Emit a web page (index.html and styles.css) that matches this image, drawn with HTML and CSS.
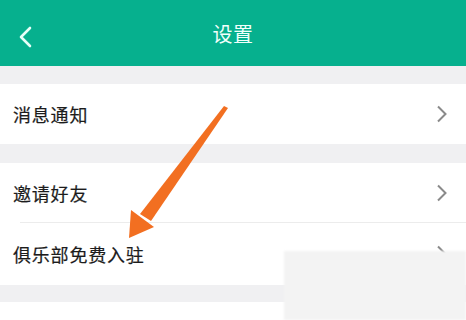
FILE: index.html
```
<!DOCTYPE html>
<html lang="zh-CN">
<head>
    <meta charset="UTF-8">
    <meta name="viewport" content="width=device-width, initial-scale=1.0">
    <title>设置</title>
    <link rel="stylesheet" href="styles.css">
</head>
<body>
    <div class="page">
        <div class="topbar">
            <svg class="back" width="16" height="22" viewBox="0 0 16 22"><path d="M13 2 L4 11 L13 20" fill="none" stroke="#e6fff8" stroke-width="2.6" stroke-linecap="round" stroke-linejoin="round"/></svg>
            <h1 class="title">设置</h1>
        </div>

        <div class="gap gap-top"></div>
        <div class="group">
            <div class="row row-first"><span>消息通知</span><svg class="more" width="12" height="18" viewBox="0 0 12 18"><path d="M2 1.5 L9.5 9 L2 16.5" fill="none" stroke="#8a8a8a" stroke-width="2"/></svg></div>
        </div>

        <div class="gap"></div>
        <div class="group">
            <div class="row"><span>邀请好友</span><svg class="more" width="12" height="18" viewBox="0 0 12 18"><path d="M2 1.5 L9.5 9 L2 16.5" fill="none" stroke="#8a8a8a" stroke-width="2"/></svg></div>
            <div class="divider"></div>
            <div class="row row-last"><span>俱乐部免费入驻</span><svg class="more" width="12" height="18" viewBox="0 0 12 18"><path d="M2 1.5 L9.5 9 L2 16.5" fill="none" stroke="#8a8a8a" stroke-width="2"/></svg></div>
        </div>
        <div class="gap gap-bottom"></div>

        <!-- annotation arrow drawn over the list -->
        <svg class="pointer" width="466" height="320" viewBox="0 0 466 320">
            <polygon points="224,106 228,108 151,221 140,214" fill="#f26f21"/>
            <polygon points="131,210 154,227 129,238" fill="#f26f21"/>
        </svg>
        <div class="mark"></div>
    </div>
</body>
</html>
```

FILE: styles.css
```
* { box-sizing: border-box; margin: 0; padding: 0; }
body { font-family: "Noto Sans CJK SC", "Noto Sans", sans-serif; background: #fff; width: 466px; height: 320px; overflow: hidden; }
.page { position: relative; width: 466px; height: 320px; }
.topbar { height: 66px; background: #06b08e; display: flex; align-items: center; justify-content: center; position: relative; }
.back { position: absolute; left: 17px; top: 26px; }
.title { color: #f2fffb; font-size: 20px; font-weight: normal; letter-spacing: 0.5px; }
.gap { height: 19px; background: #f0f0f2; }
.gap-top { height: 18px; }
.gap-bottom { height: 17px; }
.group { background: #fff; }
.row { height: 59px; display: flex; align-items: center; justify-content: space-between; padding: 0 18px 0 13px; color: #1c1c1c; font-size: 18px; letter-spacing: 0.8px; -webkit-text-stroke: 0.2px #1c1c1c; }
.row-first { height: 60px; }
.row-last { height: 62px; }
.more { flex: none; }
.divider { height: 1px; background: #ececec; margin-left: 20px; }
.pointer { position: absolute; left: 0; top: 0; }
.mark { position: absolute; left: 284px; top: 251px; width: 182px; height: 69px; background: #f3f3f3; filter: blur(1px); }
```
